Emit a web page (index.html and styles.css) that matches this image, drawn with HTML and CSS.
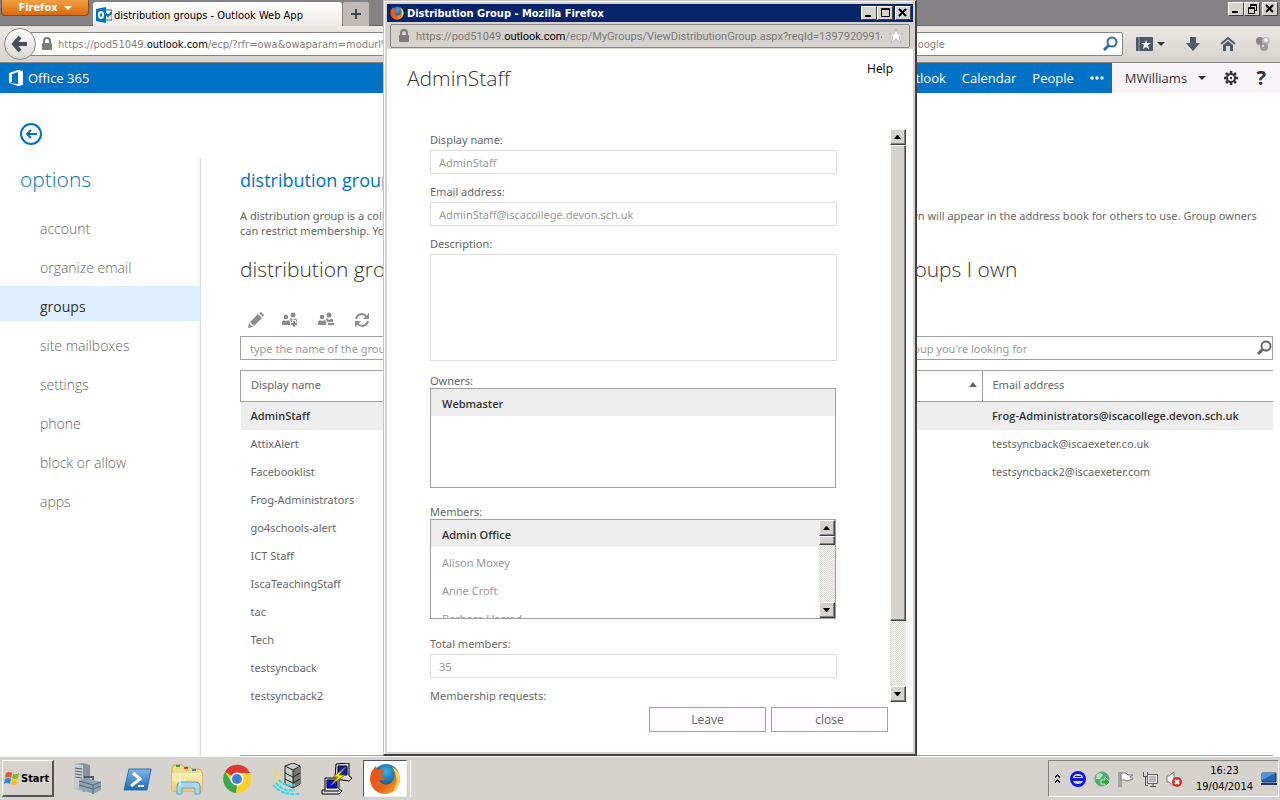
FILE: index.html
```html
<!DOCTYPE html>
<html lang="en">
<head>
  <meta charset="UTF-8" />
  <title>distribution groups - Outlook Web App</title>
  <link rel="stylesheet" href="styles.css">
</head>
<body>
  <svg class="defs" width="0" height="0" aria-hidden="true">
    <defs>
      <radialGradient id="ffGlobe" cx="50%" cy="30%" r="65%">
        <stop offset="0" stop-color="#34b6e4" /><stop offset="1" stop-color="#153a80" />
      </radialGradient>
      <linearGradient id="ffTail" x1="0" y1="0" x2="1" y2="1">
        <stop offset="0" stop-color="#e8501c" /><stop offset="0.6" stop-color="#e8641a" /><stop offset="1" stop-color="#fbc02d" />
      </linearGradient>
      <linearGradient id="psBlue" x1="0" y1="0" x2="0" y2="1">
        <stop offset="0" stop-color="#7db8e8" /><stop offset="1" stop-color="#1b6bb5" />
      </linearGradient>
      <linearGradient id="folder" x1="0" y1="0" x2="0" y2="1">
        <stop offset="0" stop-color="#fdf2b8" /><stop offset="1" stop-color="#eec968" />
      </linearGradient>
    </defs>
    <symbol id="firefox" viewBox="0 0 32 32">
      <circle cx="17" cy="14" r="13" fill="url(#ffGlobe)" />
      <path d="M3 8 C5 5 6 4 7 3 C7 5 8 6 9 7 C12 6 14 7 15 8 C15 10 13 11 12 12 C12 14 14 15 16 15 C15 18 12 17 10 17 C12 22 19 23 23 19 C27 14 26 8 23 4 C29 7 31 12 31 17 C30 26 23 31 16 31 C7 31 1 24 1 16 C1 13 2 10 3 8 Z" fill="url(#ffTail)" />
      <path d="M23 4 C29 7 31 12 31 17 C30 22 28 25 25 27 C29 20 28 11 23 4 Z" fill="#fcd34a" />
    </symbol>
    <symbol id="lock" viewBox="0 0 12 14">
      <path d="M3 7 V4 a3 3 0 0 1 6 0 V7" fill="none" stroke="#7c7c7c" stroke-width="2" />
      <rect x="1" y="6" width="10" height="7" rx="1" fill="#7c7c7c" />
    </symbol>
    <symbol id="minimize" viewBox="0 0 12 10"><path d="M2 8 H8" stroke="#000" stroke-width="2" /></symbol>
    <symbol id="close" viewBox="0 0 12 10"><path d="M2 1 L9 8 M9 1 L2 8" stroke="#000" stroke-width="2" /></symbol>
    <symbol id="magnifier" viewBox="0 0 16 16">
      <circle cx="10" cy="6" r="4.5" fill="none" stroke="currentColor" stroke-width="2" />
      <path d="M7 9 L2 14" stroke="currentColor" stroke-width="3" />
    </symbol>
    <symbol id="people" viewBox="0 0 18 16">
      <circle cx="4" cy="5" r="2.3" /><circle cx="11" cy="3" r="2.5" />
      <path d="M0 13 V10 Q1 7 4 9 Q8 7 8 10 V13 Z" />
      <path d="M8 7 Q9 5 11 8 Q14 5 15 8 V10 H9 Z" />
    </symbol>
    <symbol id="up" viewBox="0 0 8 8"><path d="M0 6 H7 L4 2 H3 Z" /></symbol>
    <symbol id="down" viewBox="0 0 8 8"><path d="M0 2 H7 L4 6 H3 Z" /></symbol>
  </svg>

  <div class="desktop">
    <div class="browser">
      <div class="tab-bar">
        <button class="firefox-button">Firefox <span class="caret"></span></button>
        <div class="tab">
          <svg width="16" height="16" viewBox="0 0 16 16">
            <path d="M8 3 H16 V13 H8 Z" fill="#fff" stroke="#0072c6" />
            <path d="M9 6 L12 9 L16 5" fill="none" stroke="#0072c6" stroke-width="2" />
            <path d="M0 2 L10 0 V16 L0 14 Z" fill="#0072c6" />
            <ellipse cx="5" cy="8" rx="2" ry="3" fill="none" stroke="#fff" stroke-width="2" />
          </svg>
          <span>distribution groups - Outlook Web App</span>
        </div>
        <button class="new-tab" aria-label="New tab">
          <svg width="12" height="12" viewBox="0 0 12 12"><path d="M6 1 V11 M1 6 H11" stroke="#3b4654" stroke-width="2" /></svg>
        </button>
        <div class="window-buttons">
          <button aria-label="Minimize"><svg width="12" height="10"><use href="#minimize" /></svg></button>
          <button aria-label="Restore">
            <svg width="12" height="10" viewBox="0 0 12 10"><path d="M4.500 3 V.5 H10.500 V6.500 H8 M2.500 3.500 H8.500 V9.500 H2.500 Z M2 4.500 H8 M4 1.500 H10" fill="none" stroke="#000" /></svg>
          </button>
          <button class="close-button" aria-label="Close"><svg width="12" height="10"><use href="#close" /></svg></button>
        </div>
      </div>

      <div class="nav-bar">
        <button class="back-button" aria-label="Back">
          <svg width="18" height="18" viewBox="0 0 18 18"><path d="M9 2 L3 9 L9 16 M3 9 H16" fill="none" stroke="#45505f" stroke-width="4" /></svg>
        </button>
        <div class="address">
          <svg width="12" height="14"><use href="#lock" /></svg>
          <span>https://pod51049.<b>outlook.com</b>/ecp/?rfr=owa&amp;owaparam=modurl%3D0</span>
        </div>
        <div class="web-search">
          <input type="text" placeholder="Google" aria-label="Web search">
          <svg class="blue" width="16" height="16"><use href="#magnifier" /></svg>
        </div>
        <div class="nav-icons">
          <button aria-label="Bookmarks">
            <svg width="30" height="16" viewBox="0 0 30 16">
              <rect x="0" y="1" width="17" height="14" rx="1" fill="#4d5a6a" />
              <path d="M3 1 V15" stroke="#8d97a3" />
              <path d="M10 4 L11 7 H15 L12 9 L13 13 L10 11 L7 13 L8 9 L5 7 H9 Z" fill="#fff" />
              <path d="M21 6 H29 L25 10 Z" fill="#333" />
            </svg>
          </button>
          <button aria-label="Downloads">
            <svg width="16" height="16" viewBox="0 0 16 16"><path d="M5 1 H11 V7 H15 L8 15 L1 7 H5 Z" fill="#4d5a6a" /></svg>
          </button>
          <button aria-label="Home">
            <svg width="16" height="16" viewBox="0 0 16 16">
              <path d="M1 8 L8 2 L15 8" fill="none" stroke="#4d5a6a" stroke-width="2" />
              <path d="M3 9 L8 5 L13 9 V15 H10 V10 H6 V15 H3 Z" fill="#4d5a6a" />
            </svg>
          </button>
          <button aria-label="Add-on">
            <svg width="16" height="16" viewBox="0 0 16 16">
              <circle cx="5" cy="5" r="4" fill="#888" /><circle cx="11" cy="5" r="4" fill="#bbb" /><circle cx="11" cy="4" r="2" fill="#eee" /><circle cx="9" cy="11" r="4" fill="#999" /><circle cx="8" cy="10" r="1" fill="#eee" />
            </svg>
          </button>
        </div>
      </div>

      <header class="suite-bar">
        <a class="brand" href="#">
          <svg width="16" height="18" viewBox="0 0 16 18">
            <path d="M1 4 L10 1 L15 2 V16 L10 17 L1 14 L10 15 V3 L4 5 V13 L1 14 Z" fill="#fff" />
          </svg>
          Office 365
        </a>
        <nav class="suite-links">
          <a href="#">Outlook</a>
          <a href="#">Calendar</a>
          <a href="#">People</a>
          <a href="#" aria-label="More">
            <svg width="14" height="4" viewBox="0 0 14 4" fill="#fff"><circle cx="2" cy="2" r="1.700" /><circle cx="7" cy="2" r="1.700" /><circle cx="12" cy="2" r="1.700" /></svg>
          </a>
        </nav>
        <div class="suite-user">
          <button>MWilliams <span class="caret"></span></button>
          <button aria-label="Settings">
            <svg width="14" height="14" viewBox="0 0 14 14">
              <path d="M7 0 V14 M0 7 H14 M2 2 L12 12 M12 2 L2 12" stroke="#333" stroke-width="2.500" />
              <circle cx="7" cy="7" r="4" fill="#f8f3f7" stroke="#333" stroke-width="2" />
              <circle cx="7" cy="7" r="1.200" fill="#333" />
            </svg>
          </button>
          <button class="help" aria-label="Help">?</button>
        </div>
      </header>

      <div class="page">
        <a class="page-back" href="#" aria-label="Back">
          <svg width="22" height="22" viewBox="0 0 22 22" fill="none" stroke="#0072c6" stroke-width="2">
            <circle cx="11" cy="11" r="10" /><path d="M11 7 L7 11 L11 15 M7 11 H17" />
          </svg>
        </a>
        <div class="columns">
          <aside class="sidebar">
            <h1>options</h1>
            <ul>
              <li><a href="#">account</a></li>
              <li><a href="#">organize email</a></li>
              <li><a class="active" href="#">groups</a></li>
              <li><a href="#">site mailboxes</a></li>
              <li><a href="#">settings</a></li>
              <li><a href="#">phone</a></li>
              <li><a href="#">block or allow</a></li>
              <li><a href="#">apps</a></li>
            </ul>
          </aside>
          <main class="main">
            <h2 class="page-title">distribution groups</h2>
            <p class="intro">A distribution group is a collection of two or more people that appears in your organization's address book. The groups that you own will appear in the address book for others to use. Group owners can restrict membership. You can also join an existing group.</p>
            <div class="lists">
              <section class="list">
                <h2>distribution groups I belong to</h2>
                <div class="list-tools">
                  <button aria-label="Details">
                    <svg width="16" height="16" viewBox="0 0 16 16" fill="#8c8c8c"><path d="M0 16 L1 11 L5 15 Z M2 10 L10 2 L14 6 L6 14 Z M11 1 L13 0 L16 3 L15 5 Z" /></svg>
                  </button>
                  <button aria-label="Join">
                    <svg width="18" height="16" viewBox="0 0 18 16" fill="#8c8c8c"><use href="#people" /><path d="M12 8 V16 M8 12 H16" stroke="#fff" stroke-width="4" /><path d="M12 9 V15 M9 12 H15" stroke="#8c8c8c" stroke-width="2" /></svg>
                  </button>
                  <button aria-label="Leave">
                    <svg width="18" height="16" viewBox="0 0 18 16" fill="#8c8c8c"><use href="#people" /><path d="M10 12 H16" stroke="#8c8c8c" stroke-width="2" /></svg>
                  </button>
                  <button aria-label="Refresh">
                    <svg width="16" height="16" viewBox="0 0 16 16" fill="none" stroke="#8c8c8c" stroke-width="2">
                      <path d="M2 7 C3 2 9 0 13 5 M14 9 C13 14 7 16 3 11" /><path d="M15 1 V7 H9 Z M1 15 V9 H7 Z" fill="#8c8c8c" stroke="none" />
                    </svg>
                  </button>
                </div>
                <div class="search">
                  <input type="text" placeholder="type the name of the group you're looking for" aria-label="Search groups">
                  <svg width="16" height="16"><use href="#magnifier" /></svg>
                </div>
                <div class="grid">
                  <table>
                    <thead><tr><th>Display name</th><th>Email address</th></tr></thead>
                    <tbody>
                      <tr class="selected"><td>AdminStaff</td><td></td></tr>
                      <tr><td>AttixAlert</td><td></td></tr>
                      <tr><td>Facebooklist</td><td></td></tr>
                      <tr><td>Frog-Administrators</td><td></td></tr>
                      <tr><td>go4schools-alert</td><td></td></tr>
                      <tr><td>ICT Staff</td><td></td></tr>
                      <tr><td>IscaTeachingStaff</td><td></td></tr>
                      <tr><td>tac</td><td></td></tr>
                      <tr><td>Tech</td><td></td></tr>
                      <tr><td>testsyncback</td><td></td></tr>
                      <tr><td>testsyncback2</td><td></td></tr>
                    </tbody>
                  </table>
                </div>
              </section>
              <section class="list">
                <h2>distribution groups I own</h2>
                <div class="list-tools"></div>
                <div class="search">
                  <input type="text" placeholder="type the name of the group you're looking for" aria-label="Search groups I own">
                  <svg width="16" height="16"><use href="#magnifier" /></svg>
                </div>
                <div class="grid">
                  <table>
                    <thead><tr><th><span class="sort">Display name <span class="sort-arrow"></span></span></th><th>Email address</th></tr></thead>
                    <tbody>
                      <tr class="selected"><td></td><td>Frog-Administrators@iscacollege.devon.sch.uk</td></tr>
                      <tr><td></td><td>testsyncback@iscaexeter.co.uk</td></tr>
                      <tr><td></td><td>testsyncback2@iscaexeter.com</td></tr>
                    </tbody>
                  </table>
                </div>
              </section>
            </div>
          </main>
        </div>
      </div>
    </div>

    <div class="popup">
      <div class="popup-title">
        <svg width="14" height="14"><use href="#firefox" /></svg>
        <span>Distribution Group - Mozilla Firefox</span>
        <div class="window-buttons">
          <button aria-label="Minimize"><svg width="12" height="10"><use href="#minimize" /></svg></button>
          <button aria-label="Maximize">
            <svg width="12" height="10" viewBox="0 0 12 10"><path d="M2.500 .5 H10.500 V8.500 H2.500 Z M2 1.500 H11" fill="none" stroke="#000" /></svg>
          </button>
          <button class="close-button" aria-label="Close"><svg width="12" height="10"><use href="#close" /></svg></button>
        </div>
      </div>
      <div class="popup-address">
        <svg width="12" height="14"><use href="#lock" /></svg>
        <span>https://pod51049.<b>outlook.com</b>/ecp/MyGroups/ViewDistributionGroup.aspx?reqId=139792099141</span>
        <svg width="16" height="16" viewBox="0 0 16 16"><path d="M8 1 L10 6 H15 L11 9 L13 15 L8 11 L3 15 L5 9 L1 6 H6 Z" fill="#fff" stroke="#bbb" /></svg>
      </div>
      <div class="popup-page">
        <div class="popup-head">
          <h2>AdminStaff</h2>
          <a href="#">Help</a>
        </div>
        <div class="popup-body">
          <form class="group-form">
            <label for="displayName">Display name:</label>
            <input id="displayName" type="text" value="AdminStaff" readonly>
            <label for="email">Email address:</label>
            <input id="email" type="text" value="AdminStaff@iscacollege.devon.sch.uk" readonly>
            <label for="description">Description:</label>
            <textarea id="description" readonly></textarea>
            <h3>Owners:</h3>
            <div class="list-box">
              <ul><li class="selected">Webmaster</li></ul>
            </div>
            <h3>Members:</h3>
            <div class="list-box">
              <ul>
                <li class="selected">Admin Office</li>
                <li>Alison Moxey</li>
                <li>Anne Croft</li>
                <li>Barbara Harrad</li>
              </ul>
              <div class="scrollbar">
                <span class="scroll-button"><svg width="8" height="8"><use href="#up" /></svg></span>
                <span class="thumb short"></span>
                <span class="scroll-button end"><svg width="8" height="8"><use href="#down" /></svg></span>
              </div>
            </div>
            <label for="total">Total members:</label>
            <input id="total" type="text" value="35" readonly>
            <h4>Membership requests:</h4>
          </form>
          <div class="scrollbar">
            <span class="scroll-button"><svg width="8" height="8"><use href="#up" /></svg></span>
            <span class="thumb"></span>
            <span class="scroll-button end"><svg width="8" height="8"><use href="#down" /></svg></span>
          </div>
        </div>
        <div class="popup-actions">
          <button>Leave</button>
          <button>close</button>
        </div>
      </div>
    </div>

    <footer class="taskbar">
      <button class="start">
        <svg width="16" height="16" viewBox="0 0 16 16">
          <path d="M2 3 Q5 1 8 3 L7 8 Q4 6 1 8 Z" fill="#e8562a" />
          <path d="M9 4 Q12 5 15 3 L14 8 Q11 10 8 8 Z" fill="#7fb928" />
          <path d="M1 9 Q4 7 7 9 L6 14 Q3 12 0 14 Z" fill="#2f86d6" />
          <path d="M8 9 Q11 11 14 9 L13 14 Q10 16 7 14 Z" fill="#f8bd22" />
        </svg>
        Start
      </button>
      <div class="launchers">
        <button aria-label="Server Manager">
          <svg width="32" height="32" viewBox="0 0 32 32">
            <path d="M3 1 L12 0 L19 2 V27 L12 29 L3 25 Z" fill="#8b9299" /><path d="M3 1 L12 2 V29 L3 25 Z" fill="#c5cacf" />
            <path d="M4 5 L11 6 M4 8 L11 9 M4 11 L11 12 M4 14 L11 15" stroke="#5c646b" />
            <path d="M14 17 V14 H22 V17" fill="none" stroke="#4d5d68" stroke-width="2" />
            <path d="M8 18 L14 15 L30 19 V27 L22 31 L8 26 Z" fill="#8ea3b1" /><path d="M8 18 L22 22 L30 19 M22 22 V31 M8 22 L22 26 L30 23" fill="none" stroke="#536773" />
          </svg>
        </button>
        <button aria-label="PowerShell">
          <svg width="32" height="32" viewBox="0 0 32 32">
            <path d="M8 6 H30 L26 27 H3 Z" fill="url(#psBlue)" stroke="#2d6ca5" />
            <path d="M12 10 L19 16 L10 23" fill="none" stroke="#fff" stroke-width="3" /><path d="M17 23 H23" stroke="#fff" stroke-width="2" />
          </svg>
        </button>
        <button aria-label="Explorer">
          <svg width="34" height="32" viewBox="0 0 34 32">
            <path d="M2 5 L4 2 H12 L14 4 H20 L22 6 H30 L32 9 V28 H2 Z" fill="#f3dc8c" stroke="#c9a94d" />
            <path d="M6 3 H10" stroke="#3a3" stroke-width="2" /><path d="M14 5 H18" stroke="#d42" stroke-width="2" /><path d="M22 7 H26" stroke="#28c" stroke-width="2" />
            <path d="M2 10 H32 V28 H2 Z" fill="url(#folder)" />
            <path d="M7 31 V23 Q7 19 11 19 H26 Q30 19 30 23 V31 H25 V25 H12 V31 Z" fill="#a9d7f2" stroke="#5ba3cc" />
            <path d="M10 11 V23 M4 17 H16" stroke="#fff" />
          </svg>
        </button>
        <button aria-label="Chrome">
          <svg width="30" height="30" viewBox="0 0 30 30">
            <circle cx="15" cy="15" r="14" fill="#fbcf2e" />
            <path d="M15 15 L3 8 A14 14 0 0 1 28 9 H15 Z" fill="#da3b2e" />
            <path d="M3 8 L10 19 L15 21 L14 29 A14 14 0 0 1 3 8 Z" fill="#36a852" />
            <circle cx="15" cy="15" r="6.500" fill="#fff" /><circle cx="15" cy="15" r="5" fill="#3e7fd6" />
          </svg>
        </button>
        <button aria-label="Network server">
          <svg width="32" height="32" viewBox="0 0 32 32">
            <path d="M14 3 L22 0 L29 3 V21 L22 25 L14 21 Z" fill="#ccc" stroke="#222" />
            <path d="M22 7 L29 3 V21 L22 25 Z" fill="#777" /><path d="M14 3 L22 7 L29 3 M14 10 L22 14 L29 10 M14 16 L22 20 L29 16 M22 7 V25" fill="none" stroke="#222" />
            <path d="M9 8 Q12 14 8 20 M6 7 Q9 13 5 20 M3 6 Q6 13 2 19" fill="none" stroke="#eedf30" stroke-dasharray="2 1" />
            <path d="M8 17 Q14 24 24 22 M5 20 Q12 29 24 27 M2 22 Q12 33 29 31" fill="none" stroke="#26dcec" stroke-width="2" stroke-dasharray="4 1" />
          </svg>
        </button>
        <button aria-label="PuTTY">
          <svg width="32" height="32" viewBox="0 0 32 32">
            <path d="M15 1 L28 0 V13 L31 15 L28 18 L14 16 Z" fill="#ddd" stroke="#000" /><path d="M17 3 H26 V12 H17 Z" fill="#0a12d8" stroke="#000" />
            <path d="M4 15 H18 V26 L21 28 L18 31 H1 V27 H4 Z" fill="#ddd" stroke="#000" /><path d="M6 17 H16 V25 H6 Z" fill="#0a12d8" stroke="#000" /><path d="M3 28 H18" stroke="#000" />
            <path d="M25 4 L12 14 L17 14 L10 22 L24 12 L18 12 Z" fill="#ffee20" stroke="#887b00" />
          </svg>
        </button>
        <button class="running" aria-label="Firefox"><svg width="32" height="32"><use href="#firefox" /></svg></button>
      </div>
      <div class="tray">
        <svg width="8" height="12" viewBox="0 0 8 12" fill="none" stroke="#000"><path d="M1 4 L3.500 1.500 L6 4 M1 5 L3.500 2.500 L6 5 M1 9 L3.500 6.500 L6 9 M1 10 L3.500 7.500 L6 10" /></svg>
        <svg width="16" height="16" viewBox="0 0 16 16"><circle cx="8" cy="8" r="8" fill="#0b12ee" /><path d="M3 7 Q3 3 8 3 Q13 3 13 7 Z M3 10 H13 Q12 13 8 13 Q4 13 3 10 Z" fill="#d5d9f5" /><path d="M5 5.500 H11" stroke="#0b12ee" /></svg>
        <svg width="16" height="16" viewBox="0 0 16 16"><circle cx="8" cy="8" r="7" fill="#51ad62" stroke="#5b9b9f" /><path d="M3 3 Q7 1 9 4 L6 8 L2 8 Z" fill="#bfe5c4" /><path d="M7 9 H11 V6 L16 11 L11 16 V13 H7 Z" fill="#31a23b" stroke="#c6eac7" /></svg>
        <svg width="16" height="16" viewBox="0 0 16 16"><path d="M1 1 V16 M3 1 V16" stroke="#777" /><path d="M3 2 H8 L10 4 H15 L12 6 L15 8 L9 10 L7 9 H3 Z" fill="#fff" stroke="#777" /></svg>
        <svg width="16" height="16" viewBox="0 0 16 16"><path d="M5.500 3.500 H15.500 V12.500 H5.500 Z" fill="#eee" stroke="#666" /><path d="M7 5 H14 V11 H7 Z" fill="#b9b9b9" /><path d="M8 15.500 H14 M11 13 V15" stroke="#555" /><path d="M1.500 1 V5.500 H5.500 V1 M3.500 5 V14.500 H6" fill="none" stroke="#555" /></svg>
        <svg width="16" height="16" viewBox="0 0 16 16"><path d="M1 5 H3 L8 1 V15 L3 11 H1 Z" fill="#fff" stroke="#777" /><circle cx="11" cy="11" r="5" fill="#d92d27" /><path d="M9 9 L13 13 M13 9 L9 13" stroke="#fff" stroke-width="2" /></svg>
        <div class="clock"><span>16:23</span><span>19/04/2014</span></div>
        <svg width="16" height="14" viewBox="0 0 16 14"><path d="M1 1 H15 V10 H1 Z" fill="#2263b8" stroke="#1a3c70" /><path d="M1 1 H15 L1 8 Z" fill="#4f92da" /><path d="M0 12 H16" stroke="#263a58" stroke-width="2" /></svg>
      </div>
    </footer>
  </div>
</body>
</html>
```
FILE: styles.css
```css
* {
  box-sizing: border-box;
}
body {
  margin: 0;
  font-family: "Open Sans", "Noto Sans", sans-serif;
  font-size: 12px;
  color: #666;
  background: #fff;
}
h1, h2, h3, h4, p, ul {
  margin: 0;
  padding: 0;
  font-weight: normal;
}
ul {
  list-style: none;
}
a {
  color: inherit;
  text-decoration: none;
}
button {
  font: inherit;
  color: inherit;
  padding: 0;
  border: none;
  background: none;
  cursor: pointer;
}
svg {
  display: block;
  flex: none;
}
.defs {
  position: absolute;
}
.desktop {
  position: relative;
  display: flex;
  flex-direction: column;
  height: 100vh;
  overflow: hidden;
}
.browser {
  flex: 1;
  min-height: 0;
  display: flex;
  flex-direction: column;
}
.caret {
  display: inline-block;
  border: 4px solid transparent;
  border-top-color: currentColor;
  border-bottom: none;
}

/* browser chrome */
.tab-bar, .nav-bar, .popup-title, .taskbar {
  font-family: "DejaVu Sans Condensed", "DejaVu Sans", sans-serif;
  font-size: 11px;
}
.tab-bar {
  display: flex;
  align-items: flex-start;
  height: 26px;
  padding-left: 1px;
  background: #858285;
  border-bottom: 1px solid #6b6b6b;
}
.firefox-button {
  width: 88px;
  height: 16px;
  display: flex;
  align-items: center;
  justify-content: center;
  gap: 6px;
  color: #fff;
  font-weight: bold;
  background: linear-gradient(#f2a044, #d96a0c);
  border: 1px solid #8a4a14;
  border-top: none;
  border-radius: 0 0 4px 4px;
}
.tab {
  display: flex;
  align-items: center;
  gap: 2px;
  width: 249px;
  height: 24px;
  margin: 2px 0 0 4px;
  padding: 2px 0 0 3px;
  color: #000;
  background: linear-gradient(#fff, #edeae6);
  border-radius: 3px 3px 0 0;
}
.new-tab {
  display: flex;
  align-items: center;
  justify-content: center;
  width: 26px;
  height: 24px;
  margin: 2px 0 0 1px;
  background: #c0bbb7;
  border-radius: 2px 2px 0 0;
}
.window-buttons {
  display: flex;
  margin-left: auto;
}
.window-buttons button {
  display: flex;
  align-items: center;
  justify-content: center;
  width: 16px;
  height: 14px;
  background: #d6d3ce;
  border: 1px solid #fff;
  border-right-color: #424142;
  border-bottom-color: #424142;
}
.window-buttons .close-button {
  margin-left: 2px;
}
.tab-bar .window-buttons {
  padding: 2px 2px 0 0;
}
.nav-bar {
  display: flex;
  align-items: center;
  height: 37px;
  padding: 0 9px 0 4px;
  background: linear-gradient(#ece9e5, #d6d3ce);
  border-bottom: 1px solid #8a8884;
}
.back-button {
  z-index: 1;
  display: flex;
  align-items: center;
  justify-content: center;
  width: 32px;
  height: 32px;
  margin-right: -6px;
  background: linear-gradient(#fff, #d9d7d4);
  border: 1px solid #8e8c8a;
  border-radius: 50%;
}
.address {
  flex: 1;
  display: flex;
  align-items: center;
  gap: 5px;
  height: 24px;
  padding-left: 10px;
  overflow: hidden;
  white-space: nowrap;
  color: #808080;
  background: #fff;
  border: 1px solid #858585;
}
.address b, .popup-address b {
  font-weight: normal;
  color: #000;
}
.web-search {
  display: flex;
  align-items: center;
  width: 236px;
  height: 24px;
  margin: 0 13px 0 6px;
  padding: 0 4px 0 22px;
  background: #fff;
  border: 1px solid #858585;
  border-radius: 2px;
}
.web-search input, .search input {
  flex: 1;
  min-width: 0;
  padding: 0;
  border: none;
  outline: none;
  background: none;
  font: inherit;
}
.web-search input::placeholder {
  color: #808080;
}
.blue {
  color: #2f6fb0;
}
.nav-icons {
  display: flex;
  align-items: center;
  gap: 19px;
}

/* office 365 bar */
.suite-bar {
  display: flex;
  height: 30px;
  line-height: 32px;
  font-size: 13px;
  color: #fff;
  background: #0072c6;
}
.brand {
  display: flex;
  align-items: center;
  gap: 4px;
  padding-left: 8px;
  margin-right: auto;
}
.suite-links {
  display: flex;
  align-items: center;
  gap: 16px;
  padding-right: 8px;
}
.suite-user {
  display: flex;
  align-items: center;
  gap: 18px;
  padding: 0 14px 0 13px;
  color: #333;
  background: #f8f3f7;
}
.suite-user .caret {
  margin: 0 0 3px 8px;
}
.help {
  font-size: 20px;
  font-weight: bold;
}

/* options page */
.page {
  flex: 1;
  min-height: 0;
  display: flex;
  flex-direction: column;
  padding-top: 30px;
}
.page-back {
  padding-left: 20px;
}
.columns {
  flex: 1;
  min-height: 0;
  display: flex;
  margin-top: 13px;
}
.sidebar {
  width: 201px;
  border-right: 1px solid #ddd;
  background: linear-gradient(to left, #f5f2f5, #fff 4px);
}
.sidebar h1 {
  height: 44px;
  padding-left: 20px;
  font-size: 21px;
  font-weight: 300;
  line-height: 42px;
  color: #0072c6;
}
.sidebar ul {
  display: flex;
  flex-direction: column;
  gap: 4px;
  margin-top: 6px;
}
.sidebar li a {
  display: block;
  height: 35px;
  padding: 2px 0 0 40px;
  font-size: 14px;
  font-weight: 300;
  line-height: 37px;
}
.sidebar .active {
  color: #333;
  font-weight: normal;
  background: #def;
}
.main {
  flex: 1;
  min-width: 0;
  display: flex;
  flex-direction: column;
  padding: 0 7px 0 39px;
}
.page-title {
  font-size: 18px;
  line-height: 44px;
  color: #0072c6;
}
.intro {
  margin-top: 6px;
  height: 30px;
  padding-right: 12px;
  font-family: "Noto Sans", sans-serif;
  font-size: 11px;
  line-height: 15px;
  overflow: hidden;
}
.lists {
  flex: 1;
  display: grid;
  grid-template-columns: 1fr 1fr;
  gap: 50px;
}
.list {
  display: flex;
  flex-direction: column;
}
.list h2 {
  height: 32px;
  margin-top: 16px;
  font-size: 21px;
  font-weight: 300;
  line-height: 30px;
  color: #333;
}
.list-tools {
  display: flex;
  align-items: center;
  gap: 18px;
  height: 50px;
  padding: 18px 8px 0;
}
.search {
  display: flex;
  align-items: center;
  height: 24px;
  padding-left: 9px;
  font-family: "Noto Sans", sans-serif;
  font-size: 11px;
  border: 1px solid #a0a0a4;
}
.search input::placeholder {
  color: #999;
}
.grid {
  flex: 1;
  margin-top: 10px;
  border-bottom: 1px solid #a0a0a4;
}
table {
  width: 100%;
  border-collapse: collapse;
  table-layout: fixed;
  font-family: "Noto Sans", sans-serif;
  font-size: 11px;
}
th, td {
  height: 28px;
  padding: 0 5px 0 10px;
  text-align: left;
  white-space: nowrap;
}
th {
  height: 31px;
  padding-bottom: 3px;
  font-weight: normal;
  border: 1px solid #a0a0a4;
  border-right: none;
}
th:first-child {
  width: 200px;
}
.sort {
  display: flex;
  align-items: center;
  justify-content: space-between;
}
.sort-arrow {
  border: 4px solid transparent;
  border-bottom: 5px solid #666;
  border-top: none;
}
.selected {
  font-family: "Open Sans", sans-serif;
  color: #333;
  font-weight: 600;
  background: #eee;
}

/* popup window */
.popup {
  position: absolute;
  top: 0;
  left: 30%;
  width: 534px;
  bottom: 44px;
  display: flex;
  flex-direction: column;
  margin-left: -1px;
  padding: 3px 2px 2px 3px;
  background: #d6d3ce;
  border: 1px solid #c8c5c0;
  border-right: 2px solid #424142;
  border-bottom: 2px solid #424142;
  box-shadow: inset 1px 1px #fff;
}
.popup-title {
  display: flex;
  align-items: center;
  gap: 3px;
  height: 18px;
  padding: 0 2px 0 3px;
  color: #fff;
  font-weight: bold;
  background: #08246b;
}
.popup-address {
  display: flex;
  align-items: center;
  gap: 6px;
  height: 24px;
  margin: 2px 3px 1px;
  padding: 0 5px 0 7px;
  font-family: Roboto, sans-serif;
  font-size: 11px;
  color: #777;
  border: 1px solid #858585;
  border-radius: 2px;
}
.popup-address span {
  flex: 1;
  overflow: hidden;
  white-space: nowrap;
}
.popup-page {
  flex: 1;
  min-height: 0;
  display: flex;
  flex-direction: column;
  background: #fff;
}
.popup-head {
  display: flex;
  justify-content: space-between;
  height: 80px;
  padding: 10px 20px;
}
.popup-head h2 {
  font-size: 21px;
  font-weight: 300;
  line-height: 38px;
  color: #333;
}
.popup-head a {
  line-height: 20px;
  color: #000;
}
.popup-body {
  flex: 1;
  min-height: 0;
  display: flex;
  justify-content: space-between;
  padding: 0 7px 0 43px;
  font-family: "Noto Sans", sans-serif;
  font-size: 11px;
  overflow: hidden;
}
.group-form {
  width: 407px;
  padding-top: 1px;
}
.group-form label, .group-form h4 {
  display: block;
  font-size: 11px;
  line-height: 20px;
  height: 20px;
}
.group-form h3 {
  padding-top: 2px;
  font-size: 11px;
  line-height: 14px;
}
.group-form input, .group-form textarea {
  display: block;
  width: 100%;
  height: 24px;
  margin-bottom: 8px;
  padding: 0 8px;
  font: inherit;
  color: #999;
  background: #fff;
  border: 1px solid #ddd;
  outline: none;
}
.group-form textarea {
  height: 107px;
  margin-bottom: 11px;
  resize: none;
}
.list-box {
  display: flex;
  height: 100px;
  margin: 0 1px 15px 0;
  border: 1px solid #a0a0a4;
  overflow: hidden;
}
.list-box ul {
  flex: 1;
  color: #999;
}
.list-box li {
  height: 28px;
  padding-left: 11px;
  line-height: 30px;
}
.list-box .selected {
  color: #333;
  border-bottom: 1px solid #fff;
}
.scrollbar {
  width: 16px;
  display: flex;
  flex-direction: column;
  background: repeating-conic-gradient(#d6d3ce 0 25%, #fff 0 50%) 0 0 / 2px 2px;
}
.scroll-button, .thumb {
  display: flex;
  align-items: center;
  justify-content: center;
  height: 16px;
  background: #d6d3ce;
  border: 1px solid #fff;
  border-right-color: #424142;
  border-bottom-color: #424142;
  box-shadow: inset -1px -1px #848284;
}
.thumb {
  height: 83%;
}
.thumb.short {
  height: 9px;
}
.scroll-button.end {
  margin-top: auto;
}
.popup-actions {
  display: flex;
  justify-content: flex-end;
  gap: 5px;
  padding: 5px 25px 20px;
}
.popup-actions button {
  width: 117px;
  height: 25px;
  background: #fffbff;
  border: 1px solid #a0a0a4;
}

/* taskbar */
.taskbar {
  display: flex;
  height: 44px;
  padding: 3px 1px 3px 2px;
  color: #000;
  background: #d6d3ce;
  border-top: 1px solid #fff;
}
.start {
  display: flex;
  align-items: center;
  gap: 1px;
  width: 52px;
  padding-left: 1px;
  font-weight: bold;
  border: 1px solid #fff;
  border-right: 2px solid #555;
  border-bottom: 2px solid #555;
}
.launchers {
  display: flex;
  margin-left: 8px;
}
.launchers button {
  display: flex;
  align-items: center;
  justify-content: center;
  width: 50px;
}
.launchers .running {
  width: 44px;
  margin-left: 1px;
  background: #fff;
  border: 1px solid #555;
  border-right-color: #eee;
  border-bottom-color: #eee;
  box-shadow: 3px 0 #d6d3ce, 4px 0 #fff;
}
.tray {
  display: flex;
  align-items: center;
  gap: 8px;
  margin-left: auto;
  padding: 0 1px 0 5px;
  border: 1px solid #848284;
  border-right-color: #fff;
  border-bottom-color: #fff;
}
.clock {
  display: flex;
  flex-direction: column;
  align-items: center;
  margin-left: 6px;
  line-height: 16px;
}
```
